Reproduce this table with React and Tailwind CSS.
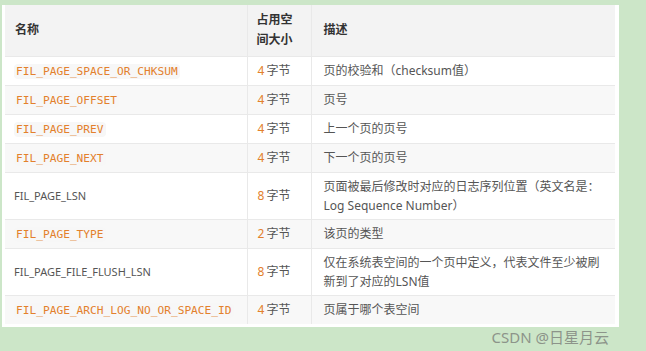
import React from "react";

const rows = [
  { name: "FIL_PAGE_SPACE_OR_CHKSUM", code: true, size: "4", desc: "页的校验和（checksum值）" },
  { name: "FIL_PAGE_OFFSET", code: true, size: "4", desc: "页号" },
  { name: "FIL_PAGE_PREV", code: true, size: "4", desc: "上一个页的页号" },
  { name: "FIL_PAGE_NEXT", code: true, size: "4", desc: "下一个页的页号" },
  {
    name: "FIL_PAGE_LSN",
    code: false,
    size: "8",
    desc: "页面被最后修改时对应的日志序列位置（英文名是：Log Sequence Number）",
  },
  { name: "FIL_PAGE_TYPE", code: true, size: "2", desc: "该页的类型" },
  {
    name: "FIL_PAGE_FILE_FLUSH_LSN",
    code: false,
    size: "8",
    desc: "仅在系统表空间的一个页中定义，代表文件至少被刷新到了对应的LSN值",
  },
  { name: "FIL_PAGE_ARCH_LOG_NO_OR_SPACE_ID", code: true, size: "4", desc: "页属于哪个表空间" },
];

const sans = "font-['Noto_Sans','Noto_Sans_CJK_SC',sans-serif]";

export default function App() {
  return (
    <div className={`w-[646px] h-[351px] bg-[#cce6c8] pt-[5px] pl-[2px] ${sans}`}>
      <div className="w-[617px] bg-white px-[3px] pb-[3px]">
        <table className="w-[610px] table-fixed border-collapse text-[12px] text-[#555]">
          <colgroup>
            <col className="w-[242px]" />
            <col className="w-[64px]" />
            <col />
          </colgroup>
          <thead>
            <tr className="bg-[#f3f3f3] h-[51px] text-[12px] font-bold text-[#333] leading-[20px]">
              <th className="text-left pl-[10px] border-r border-[#e9e9e9]">名称</th>
              <th className="text-left pl-[9px] pr-[10px] border-r border-[#e9e9e9]">占用空间大小</th>
              <th className="text-left pl-[12px]">描述</th>
            </tr>
          </thead>
          <tbody>
            {rows.map((r, i) => (
              <tr
                key={r.name}
                className={`${i % 2 === 1 ? "bg-[#f8f8f8]" : "bg-white"} border-t border-[#e9e9e9] leading-[19px]`}
              >
                <td className="pl-[9px] py-[4px] border-r border-[#e9e9e9]">
                  {r.code ? (
                    <span className="font-['DejaVu_Sans_Mono',monospace] text-[11.2px] text-[#e3802c] bg-[#f7f7f7] px-[2px] py-[1px] rounded-sm">
                      {r.name}
                    </span>
                  ) : (
                    <span className="text-[11px] text-[#555]">{r.name}</span>
                  )}
                </td>
                <td className="pl-[10px] py-[4px] border-r border-[#e9e9e9]">
                  <span className="text-[#e3802c] mr-[2px]">{r.size}</span>
                  <span>字节</span>
                </td>
                <td className="pl-[12px] pr-[10px] py-[4px]">{r.desc}</td>
              </tr>
            ))}
          </tbody>
        </table>
      </div>
      <div className="flex justify-end pr-[37px] pt-[1px] text-[15px] leading-[18px] text-[#8c948a]">
        CSDN @日星月云
      </div>
    </div>
  );
}
